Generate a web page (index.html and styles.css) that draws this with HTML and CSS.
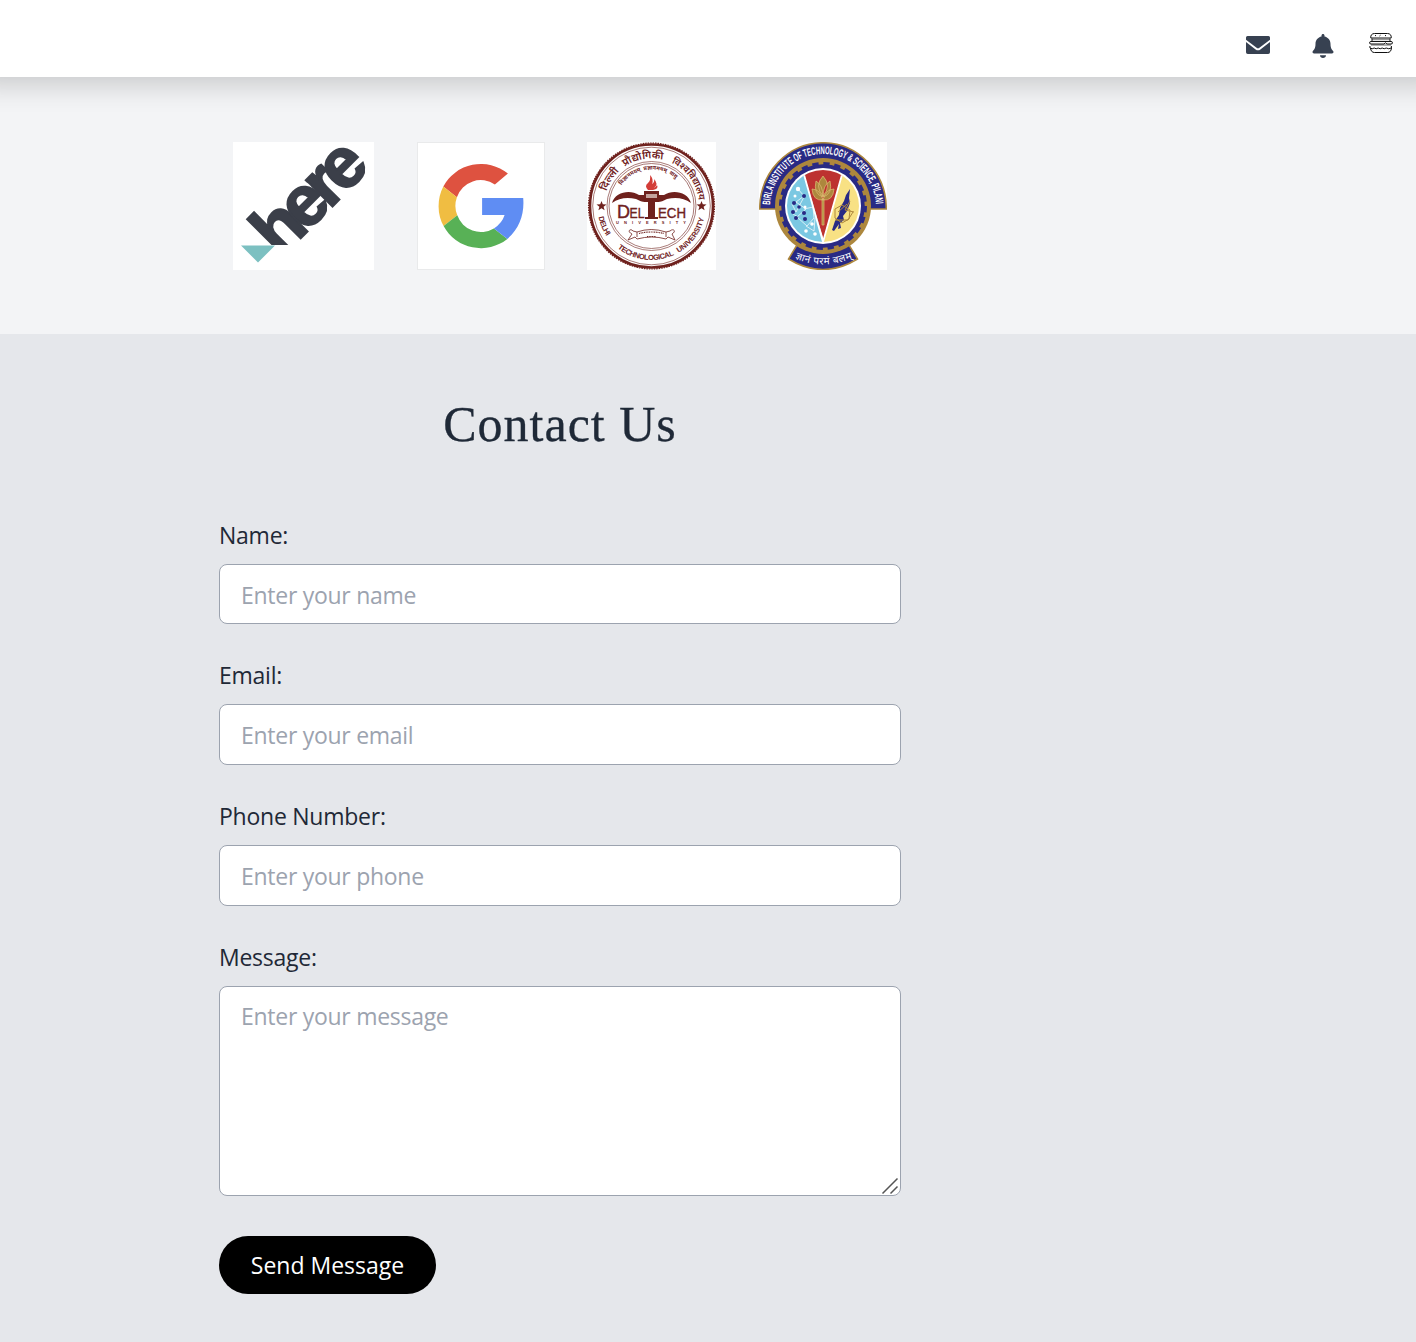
FILE: index.html
```html
<!DOCTYPE html>
<html lang="en">
<head>
<meta charset="utf-8">
<title>Contact Us</title>
<link rel="stylesheet" href="styles.css">
</head>
<body>
<header class="topbar">
  <svg class="icon-mail" viewBox="0 0 24 18" aria-label="Messages"><path d="M1.500 0h21Q24 0 24 1.500v2.300l-10.600 8q-1.400 1-2.800 0L0 3.800V1.500Q0 0 1.500 0zM0 6.100l9.600 7.300q2.400 1.700 4.800 0L24 6.100V16.200Q24 18 22.200 18H1.800Q0 18 0 16.200z"/></svg>
  <svg class="icon-bell" viewBox="0 0 448 512" aria-label="Notifications"><path d="M224 512c35 0 64-22 64-60H160c0 38 29 60 64 60zm215-150c-19-21-55-52-55-154 0-78-55-140-128-155V32c0-18-14-32-32-32s-32 14-32 32v21C119 68 64 130 64 208c0 102-36 133-55 154-6 6-9 14-9 22 0 16 13 32 32 32h384c19 0 32-16 32-32 0-8-3-16-9-22z"/></svg>
  <svg class="icon-burger" viewBox="0 0 24 20" aria-label="Menu">
    <path class="burger-fill" d="M3 6.500h18M2 12h20"/>
    <path d="M1.800 5C1.300 2.300 3 .5 5.500.5h13C21 .5 22.700 2.300 22.200 5H1.800zM3 5.500v2.500M21 5.500v2.500M2 8.500h20q1.500 0 1.500 1.300T22 11h-4l-1.500-1.200L15 11H2Q.5 11 .5 9.800T2 8.500zM1.200 13q-1 1 0 2 2 1.500 4 0 2 1.500 4 0 2 1.500 4 0 2 1.500 4 0 2.600 1.500 5 0 .8-1 0-2M1.500 15q.5 4.500 4 4.500h13q3.500 0 4-4.500M6 3l1-.8M10.500 3l1-.8M16 3l1-.8"/>
  </svg>
</header>

<section class="partners">
  <svg class="logo logo-here" viewBox="0 0 141 128" aria-label="here">
    <rect width="141" height="128" fill="#fff"/>
    <text class="here-word" transform="translate(47 117) rotate(-45)">here</text>
    <path d="M34 103h50l-17 24H30z" fill="#fff"/>
    <path d="M8 103.500h34l-17 17z" fill="#7cc0c1"/>
  </svg>

  <svg class="logo logo-google" viewBox="0 0 128 128" aria-label="Google">
    <rect x=".5" y=".5" width="127" height="127" fill="#fff" stroke="#e9eaeb"/>
    <g transform="translate(.6 .4)">
    <path fill="#de5240" d="M90.300 31.200A42.500 42.500 0 0 0 25.700 44.200L39.300 54.800A25 25 0 0 1 77.300 42.200z"/>
    <path fill="#f0bd42" d="M25.700 44.200A42.500 42.500 0 0 0 26 83.700L39.700 72.900A25 25 0 0 1 39.300 54.800z"/>
    <path fill="#58b156" d="M26 83.700A42.500 42.500 0 0 0 89.800 96.500L76.300 86A25 25 0 0 1 39.700 72.900z"/>
    <path fill="#5f8df3" d="M64.500 55.500H105.600C107 71 102 86 89.800 96.500L76.300 86Q84.500 81 87 72.700H64.500z"/>
    </g>
  </svg>

  <svg class="logo logo-dtu" viewBox="0 0 129 128" aria-label="Delhi Technological University">
    <defs>
      <path id="dtu-top" d="M17 64a47.500 47.500 0 0 1 95 0"/>
      <path id="dtu-motto" d="M28 64a36.500 36.500 0 0 1 73 0"/>
      <path id="dtu-bottom" d="M10.500 64a54 54 0 0 0 108 0"/>
    </defs>
    <rect width="129" height="128" fill="#fff"/>
    <g fill="none" stroke="#6f211d">
      <circle cx="64.500" cy="64" r="61.500" stroke-width="2.600"/>
      <circle cx="64.500" cy="64" r="63" stroke-width="1.200" stroke-dasharray="1.500 1"/>
      <circle cx="64.500" cy="64" r="58.800" stroke-width=".6"/>
      <circle cx="64.500" cy="64" r="44.500" stroke-width=".6"/>
      <circle cx="64.500" cy="64" r="42.500" stroke-width=".6"/>
    </g>
    <g fill="#6f211d">
      <text class="dtu-hindi"><textPath href="#dtu-top" startOffset="15">दिल्ली</textPath></text>
      <text class="dtu-hindi"><textPath href="#dtu-top" startOffset="46">प्रौद्योगिकी</textPath></text>
      <text class="dtu-hindi dtu-hindi-long"><textPath href="#dtu-top" startOffset="95">विश्वविद्यालय</textPath></text>
      <text class="dtu-motto"><textPath href="#dtu-motto" startOffset="22">विज्ञानमयम् &#160;प्रज्ञानमयम् &#160;वायु</textPath></text>
      <text class="dtu-ring"><textPath href="#dtu-bottom" startOffset="11" textLength="21">DELHI</textPath></text>
      <text class="dtu-ring"><textPath href="#dtu-bottom" startOffset="48" textLength="60">TECHNOLOGICAL</textPath></text>
      <text class="dtu-ring"><textPath href="#dtu-bottom" startOffset="113" textLength="44">UNIVERSITY</textPath></text>
      <path d="M14.500 59l1.300 3.300 3.700.1-2.900 2.300 1 3.600-3.100-2-3.100 2 1-3.600-2.900-2.300 3.700-.1zM114.500 59l1.300 3.300 3.700.1-2.900 2.300 1 3.600-3.100-2-3.100 2 1-3.600-2.900-2.300 3.700-.1z"/>
      <path d="M25 61c3-11 18-14 27-8h25c9-6 24-3 27 8-7-5-15-6-24-4-4 2-6 3-9 3H58c-3 0-5-1-9-3-9-2-17-1-24 4z"/>
      <path d="M57 49h15v11h-4v15h3v2H58v-2h3V60h-4z"/>
      <path d="M59 52h11v4H59z" fill="#c5a39d"/>
      <text class="dtu-cap" x="30" y="76">D</text><text class="dtu-small" x="42.500" y="76" textLength="15" lengthAdjust="spacingAndGlyphs">EL</text>
      <text class="dtu-small" x="71" y="76" textLength="28" lengthAdjust="spacingAndGlyphs">ECH</text>
      <text class="dtu-tiny" x="29" y="81.500" textLength="70">UNIVERSITY</text>
    </g>
    <path fill="#d33d38" d="M61 48q-4-4 0-7 3-3 2-8 4 4 2 9 3-2 2-5 5 5 0 9 2-1 3-3 2 4-4 5z"/>
    <g fill="none" stroke="#6f211d">
      <path stroke-width=".8" d="M45 92c-6-3-1-6 1-3l4 1q14-5 29 0l4-1c3-3 7 0 2 3l3 6-7-3-2 2q-14-4-29 0l-2-2-7 3zM50 90v5M79 90v5"/>
      <path stroke-width="1.200" stroke-dasharray="1 .7" d="M52 91.500q12-3 25 0"/><path stroke-width="1" stroke-dasharray="1 .7" d="M60 94.500h9"/>
    </g>
  </svg>

  <svg class="logo logo-bits" viewBox="0 0 128 128" aria-label="Birla Institute of Technology and Science, Pilani">
    <defs>
      <path id="bits-arc" d="M11 66a53 54 0 0 1 106 0"/>
      <path id="bits-foot" d="M35 116q29 13 59 0"/>
      <clipPath id="bits-disc"><circle cx="64" cy="64" r="36"/></clipPath>
    </defs>
    <rect width="128" height="128" fill="#fff"/>
    <path d="M.7 67a63.300 66.300 0 0 1 126.600 0H106a42 42 0 0 0-84 0z" fill="#292a84" stroke="#ad873d" stroke-width="1.500"/>
    <path d="M38 103L29.500 117Q64 138 98.500 117L90 103z" fill="#292a84" stroke="#ad873d" stroke-width="1.500"/>
    <circle cx="64" cy="64" r="48" fill="#ad873d"/>
    <circle cx="64" cy="64" r="39.500" fill="none" stroke="#292a84" stroke-width="4.500"/>
    <circle cx="64" cy="64" r="41.500" fill="none" stroke="#292a84" stroke-width="5" stroke-dasharray="6.200 4.665"/>
    <circle cx="64" cy="64" r="38" fill="#fff"/>
    <g clip-path="url(#bits-disc)">
      <path d="M0 0h43l21 101H0z" fill="#7bc8e2"/><path d="M85 0h43v101H64z" fill="#f8e184"/>
      <path d="M42 22h44L64.500 97z" fill="#bd3230"/>
      <path d="M42 22l22 78 22-78" fill="none" stroke="#fff" stroke-width="1.800"/>
    </g>
    <g fill="#ad873d" stroke="#e0bd74" stroke-width=".7">
      <path d="M63 57h2v26h-2zM64 34q9 10 0 20-9-10 0-20zM57 39q7 4 7 16-10-3-7-16zM71 39q-7 4-7 16 10-3 7-16zM53 47q8 0 11 11-10 1-11-11zM75 47q-8 0-11 11 10 1 11-11z"/>
    </g>
    <g fill="none" stroke="#fff" stroke-width=".7"><path d="M39 47l6 7-8 6 10 7-9 8 10 9 7-8-1-11-9 2M33 62l4 8 8-15M47 84l8 5 1-13M34 72l5 3"/></g>
    <g fill="#292a84"><circle cx="45" cy="54" r="2"/><circle cx="35" cy="61" r="2"/><circle cx="40" cy="65" r="1.800"/><circle cx="34" cy="70" r="2"/><circle cx="45" cy="71" r="2"/><circle cx="37" cy="76" r="2"/><circle cx="46" cy="77" r="2"/></g>
    <g fill="#fff"><circle cx="39" cy="47" r="2.200"/><circle cx="36" cy="54" r="1.500"/><circle cx="46" cy="65" r="1.500"/><circle cx="53" cy="82" r="1.800"/><circle cx="47" cy="89" r="1.800"/><circle cx="56" cy="92" r="1.800"/></g>
    <path fill="#292a84" d="M91 47l-1 9 1 5-3 8-4 5 1 4-4 3 1 5-3 1 1-5-5 7-2-1 3-9 4-6 1-7 4-7 2-6z"/>
    <path fill="none" stroke="#ad873d" stroke-width="1" d="M76 67l7-4 8 5-1 9-7 4-7-5zM79 70l9-8M91 59l-5 9 9 2M76 78h13l5-8"/>
    <text class="bits-ring"><textPath href="#bits-arc" startOffset="3" textLength="161" lengthAdjust="spacingAndGlyphs">BIRLA INSTITUTE OF TECHNOLOGY &amp; SCIENCE, PILANI</textPath></text>
    <text class="bits-motto"><textPath href="#bits-foot" startOffset="1" textLength="59">ज्ञानं परमं बलम्</textPath></text>
  </svg>
</section>

<main class="contact">
  <h1 class="contact-title">Contact Us</h1>
  <form class="contact-form">
    <div class="field"><label class="label" for="name">Name:</label><input class="control" id="name" type="text" placeholder="Enter your name"></div>
    <div class="field"><label class="label" for="email">Email:</label><input class="control" id="email" type="email" placeholder="Enter your email"></div>
    <div class="field"><label class="label" for="phone">Phone Number:</label><input class="control" id="phone" type="tel" placeholder="Enter your phone"></div>
    <div class="field field-message">
      <label class="label" for="message">Message:</label>
      <div class="message-box">
        <textarea class="control message" id="message" placeholder="Enter your message"></textarea>
        <svg class="grip" viewBox="0 0 18 18"><path d="M1.500 16.500l15-15M9.500 16.500l7-7"/></svg>
      </div>
    </div>
    <button class="send" type="button">Send Message</button>
  </form>
</main>
</body>
</html>
```
FILE: styles.css
```css
* { box-sizing: border-box; }
body {
  margin: 0;
  background: #e5e7eb;
  color: #1f2937;
  font-family: "Open Sans", "Noto Sans", sans-serif;
  font-size: 23px;
}
.topbar {
  position: relative;
  display: flex;
  justify-content: flex-end;
  align-items: flex-start;
  height: 77px;
  padding: 33px 23px 0 0;
  background: #fff;
  box-shadow: 0 -18px 27px 25px rgba(0, 0, 0, .19);
}
.topbar svg { fill: #374151; }
.icon-mail { width: 24px; height: 18px; margin: 3px 42px 0 0; }
.icon-bell { width: 22px; height: 24px; margin: 1px 35px 0 0; }
.topbar .icon-burger { width: 24px; height: 20px; fill: none; stroke: #111; stroke-width: 1; }
.icon-burger .burger-fill { stroke: #999; stroke-width: 1.5; }

.partners {
  display: flex;
  height: 257px;
  padding: 65px 0 0 233px;
  background: #f3f4f6;
}
.logo { width: 128px; height: 128px; flex: none; }
.logo-here { width: 141px; margin-right: 43px; }
.logo-google { margin-right: 42px; }
.logo-dtu { width: 129px; margin-right: 43px; }
.here-word {
  font: bold 71px "Liberation Sans", Arial, sans-serif;
  letter-spacing: -6.8px;
  fill: #3b3f49;
  stroke: #3b3f49;
  stroke-width: 2px;
}
.dtu-hindi { font: 600 10.5px "Noto Sans", "Noto Sans Devanagari", sans-serif; }
.dtu-hindi-long { font-size: 9.5px; }
.dtu-motto { font: bold 5.5px "Noto Sans", "Noto Sans Devanagari", sans-serif; }
.dtu-ring { font: bold 7.5px "Liberation Sans", sans-serif; }
.dtu-cap { font: 18px "Liberation Sans", sans-serif; stroke: #6f211d; stroke-width: .4px; }
.dtu-small { font: 15px "Liberation Sans", sans-serif; stroke: #6f211d; stroke-width: .4px; }
.dtu-tiny { font: bold 4px "Liberation Sans", sans-serif; }
.bits-ring { font: bold 11px "Liberation Sans Narrow", "Liberation Sans", sans-serif; fill: #fff; }
.bits-motto { font: 10px "Noto Sans", "Noto Sans Devanagari", sans-serif; fill: #fff; }

.contact { width: 682px; margin: 0 0 0 219px; padding: 62px 0 48px; }
.contact-title {
  margin: 0 0 67.75px;
  height: 56px;
  font: 400 50px/56px "Liberation Serif", Georgia, serif;
  letter-spacing: 1px;
  text-align: center;
  -webkit-text-stroke: .3px #1f2937;
}
.contact-form { display: flex; flex-direction: column; align-items: flex-start; }
.field { display: flex; flex-direction: column; width: 100%; margin-bottom: 36px; }
.field-message { margin-bottom: 40px; }
.label { height: 32px; margin-bottom: 12px; line-height: 31px; letter-spacing: -.25px; }
.control {
  display: block;
  width: 100%;
  height: 60.67px;
  padding: 1px 21px 0;
  border: 1px solid #9ca3af;
  border-radius: 8px;
  outline: 0;
  background: #fff;
  color: #1f2937;
  font: inherit;
  letter-spacing: -.28px;
}
.control::placeholder { color: #9ca3af; opacity: 1; }
.message-box { position: relative; }
.message { height: 210px; padding-top: 14px; line-height: 31px; resize: none; }
.grip { position: absolute; right: 2px; bottom: 1px; width: 18px; height: 18px; fill: none; stroke: #555; stroke-width: 1.5; }
.send {
  width: 217px;
  height: 58px;
  padding: 0;
  border: 0;
  border-radius: 29px;
  background: #000;
  color: #fff;
  font: inherit;
}
```
